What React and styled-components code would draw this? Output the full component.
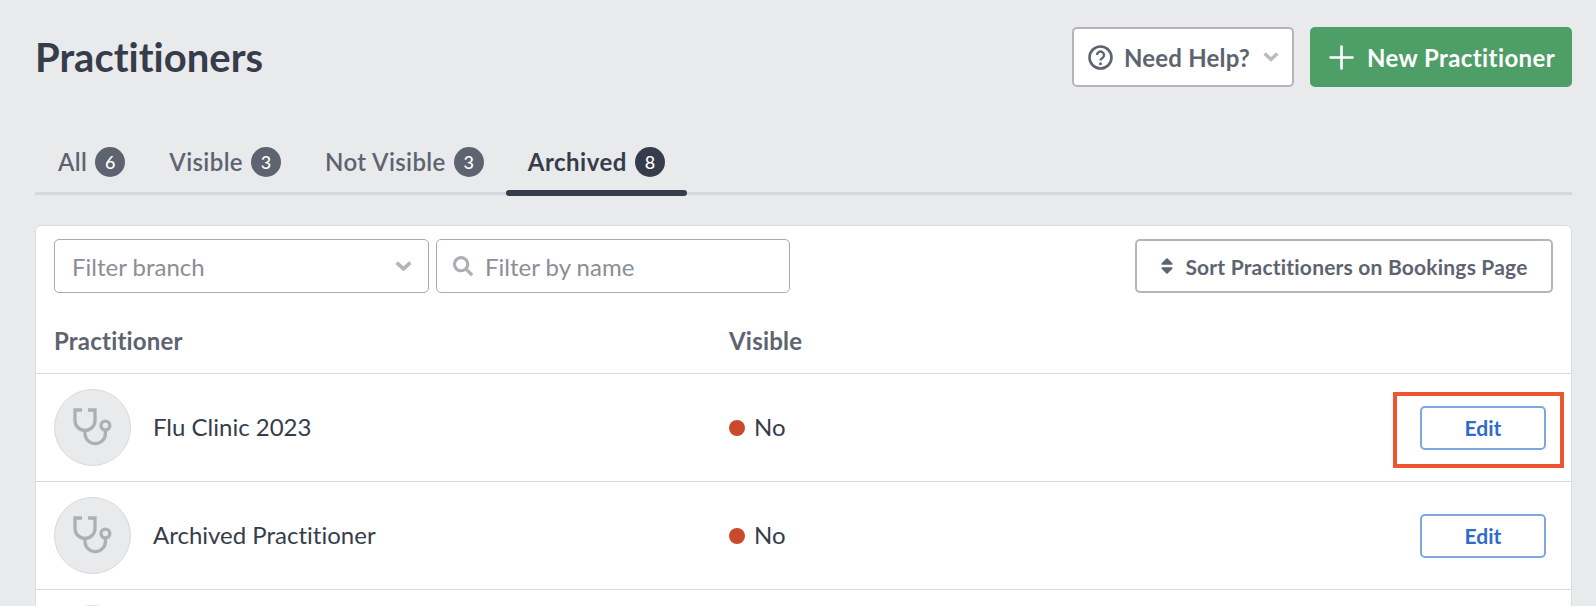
import React from "react";
import styled, { createGlobalStyle } from "styled-components";
import { FaSearch, FaSort } from "react-icons/fa";

const tabs = [
  { label: "All", count: 6 },
  { label: "Visible", count: 3 },
  { label: "Not Visible", count: 3 },
  { label: "Archived", count: 8, active: true },
];

const rows = [
  { name: "Flu Clinic 2023", highlighted: true },
  { name: "Archived Practitioner" },
  { name: "", hidden: true },
];

const Stethoscope = () => (
  <svg width="40" height="40" viewBox="0 0 40 40" fill="none" stroke="#adafb5" strokeWidth="3.3">
    <path d="M9 2H2V12.4a10 10 0 0 0 20 0V2H15" />
    <path d="M12 22.4v3a10.2 10.2 0 0 0 20.4 0v-3.4" />
    <circle cx="32.4" cy="17.6" r="4.4" />
  </svg>
);

const HelpIcon = () => (
  <HelpSvg width="25" height="25" viewBox="0 0 25 25" fill="none" stroke="currentColor" strokeWidth="2.6">
    <circle cx="12.5" cy="12.5" r="11" />
    <path d="M9 10a3.5 3.5 0 1 1 5.4 3c-1.3.8-1.9 1.3-1.9 2.6" strokeWidth="2.4" />
    <circle cx="12.5" cy="18.8" r="1.5" fill="currentColor" stroke="none" />
  </HelpSvg>
);

const PlusIcon = () => (
  <svg width="25" height="25" viewBox="0 0 25 25" stroke="#fff" strokeWidth="2.6" strokeLinecap="round">
    <path d="M12.5 1.5v22M1.5 12.5h22" />
  </svg>
);

const Chevron = ({ width }) => (
  <svg width={width} height={width * 0.62} viewBox="0 0 16 10" fill="none" stroke="currentColor" strokeWidth="3.4">
    <path d="M1.5 1.5 8 7.5l6.5-6" />
  </svg>
);

const App = () => {
  return (
    <Page>
      <GlobalStyle />
      <Header>
        <Title>Practitioners</Title>
        <Actions>
          <HelpButton>
            <HelpIcon />
            <span>Need Help?</span>
            <HelpChevron><Chevron width={16} /></HelpChevron>
          </HelpButton>
          <NewButton>
            <PlusIcon />
            New Practitioner
          </NewButton>
        </Actions>
      </Header>

      <Tabs>
        {tabs.map((tab) => (
          <Tab key={tab.label} $active={tab.active}>
            {tab.label}
            <Badge $active={tab.active}>{tab.count}</Badge>
          </Tab>
        ))}
      </Tabs>

      <Card>
        <Toolbar>
          <BranchSelect>
            Filter branch
            <SelectChevron><Chevron width={17} /></SelectChevron>
          </BranchSelect>
          <NameFilter>
            <FaSearch size={20} color="#adafb5" />
            Filter by name
          </NameFilter>
          <SortButton>
            <FaSort size={20} />
            Sort Practitioners on Bookings Page
          </SortButton>
        </Toolbar>

        <HeadRow>
          <NameHead>Practitioner</NameHead>
          <span>Visible</span>
        </HeadRow>

        {rows.map((row, i) => (
          <Row key={i}>
            <NameCell>
              <Avatar><Stethoscope /></Avatar>
              <CellText>{row.name}</CellText>
            </NameCell>
            {!row.hidden && (
              <VisibleCell>
                <Dot />
                <CellText>No</CellText>
              </VisibleCell>
            )}
            {!row.hidden && (
              <EditWrap>
                <EditButton>Edit</EditButton>
                {row.highlighted && <Highlight />}
              </EditWrap>
            )}
          </Row>
        ))}
      </Card>
    </Page>
  );
};

export default App;

const GlobalStyle = createGlobalStyle`
  html, body {
    margin: 0;
    height: 606px;
    overflow: hidden;
    background: #e9eaec;
  }
  * {
    box-sizing: border-box;
    font-variant-ligatures: none;
  }
`;

const Page = styled.div`
  height: 606px;
  overflow: hidden;
  padding: 27px 24px 0 35px;
  font-family: Lato, "Open Sans", sans-serif;
  color: #363c4a;
`;

const Header = styled.div`
  display: flex;
  justify-content: space-between;
  align-items: center;
  height: 60px;
`;

const Title = styled.h1`
  margin: 0;
  font-size: 40px;
  font-weight: 700;
  color: #363c4a;
`;

const Actions = styled.div`
  display: flex;
  gap: 16px;
`;

const HelpSvg = styled.svg`
  flex: none;
`;

const HelpButton = styled.button`
  display: flex;
  align-items: center;
  gap: 11px;
  width: 222px;
  height: 60px;
  padding: 0 10px 0 14px;
  background: #fff;
  border: 2px solid #b3b5bb;
  border-radius: 5px;
  font: 700 24px Lato, sans-serif;
  letter-spacing: 0.2px;
  white-space: nowrap;
  color: #5e6370;
`;

const HelpChevron = styled.span`
  display: flex;
  margin-left: 2px;
  color: #b9bbc0;
`;

const NewButton = styled.button`
  display: flex;
  align-items: center;
  gap: 13px;
  width: 262px;
  height: 60px;
  padding: 0 0 0 19px;
  background: #4e9e68;
  border: none;
  border-radius: 5px;
  font: 700 24px Lato, sans-serif;
  letter-spacing: 0.4px;
  white-space: nowrap;
  color: #fff;
`;

const Tabs = styled.div`
  display: flex;
  height: 48px;
  margin-top: 60px;
  padding-left: 1px;
  border-bottom: 3px solid #d6d7da;
`;

const Tab = styled.div`
  position: relative;
  display: flex;
  align-items: flex-start;
  gap: 8px;
  padding: 0 22px;
  font-size: 24px;
  line-height: 30px;
  letter-spacing: ${(p) => (p.$active ? "0.5px" : "0.4px")};
  font-weight: ${(p) => (p.$active ? 700 : 600)};
  color: ${(p) => (p.$active ? "#363c4a" : "#5e6370")};

  ${(p) =>
    p.$active &&
    `&::after {
      content: "";
      position: absolute;
      left: 0;
      right: 0;
      bottom: -4px;
      height: 6px;
      border-radius: 3px;
      background: #363c4a;
    }`}
`;

const Badge = styled.span`
  display: flex;
  align-items: center;
  justify-content: center;
  width: 30px;
  height: 30px;
  border-radius: 50%;
  font-size: 18px;
  font-weight: 500;
  letter-spacing: 0;
  color: #fff;
  background: ${(p) => (p.$active ? "#363c4a" : "#5e6370")};
`;

const Card = styled.div`
  margin-top: 30px;
  background: #fff;
  border: 1px solid #dcdde0;
  border-radius: 6px 6px 0 0;
`;

const Toolbar = styled.div`
  display: flex;
  align-items: center;
  gap: 7px;
  padding: 13px 18px 0;
`;

const BranchSelect = styled.div`
  display: flex;
  align-items: center;
  justify-content: space-between;
  width: 375px;
  height: 54px;
  padding: 0 16px 0 17px;
  border: 1px solid #a9abb2;
  border-radius: 5px;
  font-size: 24px;
  color: #8b8e96;
`;

const SelectChevron = styled.span`
  display: flex;
  color: #b3b5bb;
`;

const NameFilter = styled.div`
  display: flex;
  align-items: center;
  gap: 12px;
  width: 354px;
  height: 54px;
  padding: 0 16px;
  border: 1px solid #a9abb2;
  border-radius: 5px;
  font-size: 24px;
  color: #8b8e96;
`;

const SortButton = styled.button`
  display: flex;
  align-items: center;
  justify-content: center;
  gap: 8px;
  width: 418px;
  height: 54px;
  margin-left: auto;
  padding: 0 3px 0 0;
  background: #fff;
  border: 2px solid #b3b5bb;
  border-radius: 5px;
  font: 700 21px Lato, sans-serif;
  letter-spacing: 0.2px;
  color: #5e6370;
`;

const HeadRow = styled.div`
  display: flex;
  align-items: center;
  height: 81px;
  padding: 14px 18px 0;
  font-size: 24px;
  font-weight: 700;
  letter-spacing: 0.2px;
  color: #5e6370;
  border-bottom: 1px solid #d6d7da;
`;

const NameHead = styled.span`
  width: 675px;
`;

const Row = styled.div`
  display: flex;
  align-items: center;
  height: 108px;
  padding: 0 25px 0 18px;
  border-bottom: 1px solid #d6d7da;
`;

const NameCell = styled.div`
  display: flex;
  align-items: center;
  gap: 22px;
  width: 675px;
  font-size: 24px;
  color: #363c4a;
`;

const CellText = styled.span`
  margin-bottom: 3px;
`;

const Avatar = styled.div`
  display: flex;
  align-items: center;
  justify-content: center;
  flex: none;
  width: 77px;
  height: 77px;
  padding-top: 1px;
  border-radius: 50%;
  background: #e9eaec;
  border: 1px solid #d8d9dc;
`;

const VisibleCell = styled.div`
  display: flex;
  align-items: center;
  gap: 9px;
  font-size: 24px;
  color: #363c4a;
`;

const Dot = styled.span`
  width: 16px;
  height: 16px;
  border-radius: 50%;
  background: #c9492d;
`;

const EditWrap = styled.div`
  position: relative;
  margin-left: auto;
`;

const EditButton = styled.button`
  display: block;
  width: 126px;
  height: 44px;
  padding: 0;
  background: #fff;
  border: 2px solid #7fa6e0;
  border-radius: 5px;
  font: 700 21px Lato, sans-serif;
  color: #2f6bc9;
`;

const Highlight = styled.div`
  position: absolute;
  top: -14px;
  left: -27px;
  right: -18px;
  bottom: -18px;
  border: 4px solid #ee5430;
  pointer-events: none;
`;
